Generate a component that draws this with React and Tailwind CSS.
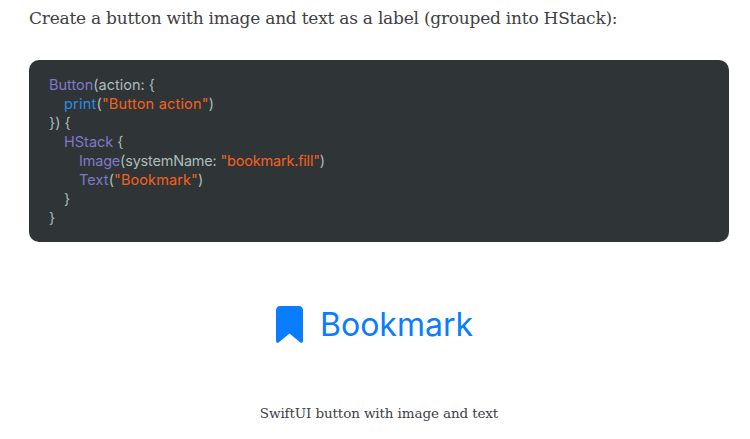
const Code = ({ className = "", children }) => (
  <div className={`h-[19px] whitespace-pre ${className}`}>{children}</div>
);

const Kw = ({ children }) => <span className="text-[#7f79c9]">{children}</span>;
const Fn = ({ children }) => <span className="text-[#2b8be6]">{children}</span>;
const Str = ({ children }) => <span className="text-[#f9601c]">{children}</span>;

export default function App() {
  return (
    <div className="w-[750px] h-[439px] bg-white overflow-hidden">
      <p className="pl-[29px] pt-[5px] text-[17px] leading-[27px] text-[#3d4144] font-['DejaVu_Serif',serif] tracking-[-0.23px]">
        Create a button with image and text as a label (grouped into HStack):
      </p>
      <div className="mt-[28px] ml-[29px] w-[700px] h-[182px] rounded-[10px] bg-[#2f3437] pl-[20px] pt-[15px] text-[14.5px] leading-[19px] text-[#a9bdb9] font-['Inter',sans-serif]">
        <Code><Kw>Button</Kw>(action: {"{"}</Code>
        <Code className="pl-[15px] tracking-[0.2px]"><Fn>print</Fn>(<Str>"Button action"</Str>)</Code>
        <Code>{"}) {"}</Code>
        <Code className="pl-[15px]"><Kw>HStack</Kw> {"{"}</Code>
        <Code className="pl-[30px] tracking-[-0.2px]"><Kw>Image</Kw>(systemName: <Str>"bookmark.fill"</Str>)</Code>
        <Code className="pl-[30px] tracking-[0.1px]"><Kw>Text</Kw>(<Str>"Bookmark"</Str>)</Code>
        <Code className="pl-[15px]">{"}"}</Code>
        <Code>{"}"}</Code>
      </div>
      <div className="mt-[64px] ml-[276px] flex items-center gap-[17px] text-[#0a7cff]">
        <svg width="27" height="37" viewBox="0 0 27 37" fill="currentColor">
          <path d="M4 0H23C25.2 0 27 1.8 27 4V35C27 36.6 25.4 37.4 24 36.2L13.5 27.5L3 36.2C1.6 37.4 0 36.6 0 35V4C0 1.8 1.8 0 4 0Z" />
        </svg>
        <span className="text-[32px] leading-[37px] font-['Inter',sans-serif]">Bookmark</span>
      </div>
      <p className="mt-[60px] text-center text-[13.5px] leading-[20px] text-[#3d4144] font-['DejaVu_Serif',serif] tracking-[-0.12px] pl-[8px]">
        SwiftUI button with image and text
      </p>
    </div>
  );
}
